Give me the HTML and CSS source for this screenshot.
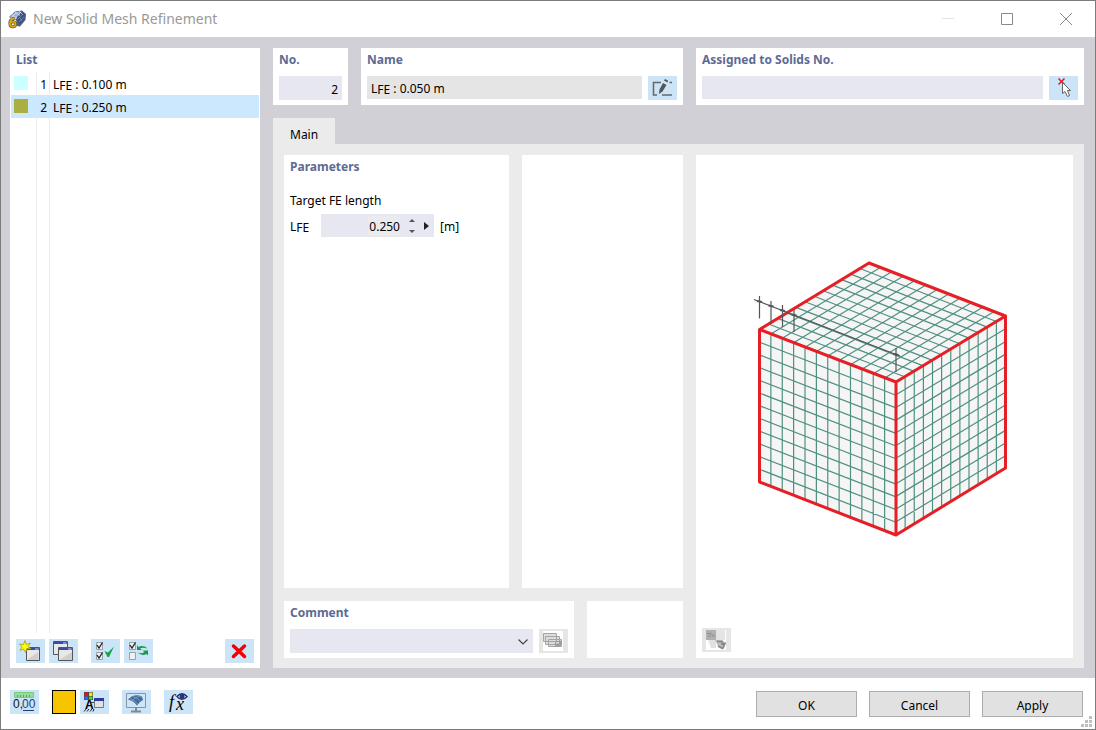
FILE: index.html
```html
<!DOCTYPE html>
<html lang="en">
<head>
<meta charset="utf-8">
<title>New Solid Mesh Refinement</title>
<link rel="stylesheet" href="styles.css">
</head>
<body>
<div class="window">
  <header class="titlebar">
    <svg class="app-icon" width="20" height="20" viewBox="0 0 20 20" aria-hidden="true">
      <path d="M2 8 8 2.500 15 1.500 19 5 18.500 11 13 17.500 10 17 9 11Z" fill="#4b6290"/>
      <path d="M3 7.500 8.500 3 14 2.500 10 7.500 8 11Z" fill="#9db4d8"/>
      <path d="M10 8 15 3 18 6 17 11 12.500 16Z" fill="#3d4f78"/>
      <path d="M5 5.500 10 9.500M8 3 13 6.500M12 2 16 6M4 9 9 4M8 10 14 3" stroke="#dce6f5" stroke-width=".7" fill="none"/>
      <path d="M11 10 16 5M12 13 17 8M13 9 15 12" stroke="#8297bf" stroke-width=".7"/>
      <path d="M7.500 9.500C4 9.500 3 12 3 14.500c0 4.500 5.500 4 5.500.5 0-2.800-4-3.300-5.500-.5" fill="none" stroke="#4d420f" stroke-width="3"/>
      <path d="M7.500 9.500C4 9.500 3 12 3 14.500c0 4.500 5.500 4 5.500.5 0-2.800-4-3.300-5.500-.5" fill="none" stroke="#e0a91c" stroke-width="1.800"/>
    </svg>
    <h1 class="title">New Solid Mesh Refinement</h1>
    <button class="win-button" aria-label="Minimize" disabled><svg width="12" height="12" viewBox="0 0 12 12"><path d="M0 5.500H12" stroke="#e3e3e3"/></svg></button>
    <button class="win-button" aria-label="Maximize"><svg width="12" height="12" viewBox="0 0 12 12"><path d="M.5.5H11.500V11.500H.5Z" fill="none" stroke="#8a8a8a"/></svg></button>
    <button class="win-button" aria-label="Close"><svg width="12" height="12" viewBox="0 0 12 12"><path d="M0 0 12 12M12 0 0 12" stroke="#8a8a8a"/></svg></button>
  </header>

  <main class="content">
    <section class="card list-card">
      <h2 class="heading">List</h2>
      <ul class="list" role="listbox" aria-label="List">
        <li class="row" role="option" aria-selected="false"><span class="swatch swatch-cyan"></span><span class="row-no">1</span><span>L<span class="low">FE</span> : 0.100 m</span></li>
        <li class="row selected" role="option" aria-selected="true"><span class="swatch swatch-olive"></span><span class="row-no">2</span><span>L<span class="low">FE</span> : 0.250 m</span></li>
      </ul>
      <div class="toolbar">
        <button class="tool" aria-label="New">
          <svg viewBox="0 0 29 24">
            <path d="M10.500 8.500H23.500V21.500H10.500Z" fill="#e8e8e8" stroke="#555"/><path d="M11 9H23V11H11Z" fill="#3b49a8"/><path d="M19 10H22.500" stroke="#c9d0ff"/><path d="M12 20 22.500 13V21H12Z" fill="#cfcfcf"/>
            <path d="M9 1.500 10.300 5.500 14.500 4 12 7.500 15 10 10.800 9.500 9.500 13.500 7.500 10 4 11.500 6 8 3.500 5 7.500 5.500Z" fill="#ff0" stroke="#a39a20" stroke-width=".8"/>
          </svg>
        </button>
        <button class="tool" aria-label="Copy">
          <svg viewBox="0 0 29 24">
            <path d="M4.500 2.500H18.500V15.500H4.500Z" fill="#e8e8e8" stroke="#555"/><path d="M5 3H18V5H5Z" fill="#3b49a8"/><path d="M14 4H17.500" stroke="#c9d0ff"/>
            <path d="M9.500 8.500H23.500V21.500H9.500Z" fill="#e8e8e8" stroke="#555"/><path d="M10 9H23V11H10Z" fill="#3b49a8"/><path d="M19 10H22.500" stroke="#c9d0ff"/><path d="M11 20.500 23 13V21H11Z" fill="#cfcfcf"/>
          </svg>
        </button>
        <button class="tool tool-spaced" aria-label="Check all">
          <svg viewBox="0 0 29 24">
            <path d="M5.500 3.500H11.500V10.500H5.500ZM5.500 13.500H11.500V20.500H5.500Z" fill="#eef0f2" stroke="#98a1aa"/><path d="M6 6 8 9 11.500 3.500M6 16 8 19 11.500 13.500" fill="none" stroke="#222" stroke-width="1.300"/>
            <path d="M13.500 12 17 13.500 23 7.500 18 18H16.500Z" fill="#14a34a"/>
          </svg>
        </button>
        <button class="tool" aria-label="Invert selection">
          <svg viewBox="0 0 29 24">
            <path d="M5.500 3.500H11.500V10.500H5.500ZM5.500 13.500H11.500V20.500H5.500Z" fill="#eef0f2" stroke="#98a1aa"/><path d="M6 6 8 9 11.500 3.500" fill="none" stroke="#222" stroke-width="1.300"/>
            <path d="M13 11V6L14.500 8Q19 5.500 23.500 9.500 18.500 8 16 9.500L18 11ZM24 11.500V16.500L22.500 15Q18 17.500 13.500 13.500 18.500 15 20.500 13L18.500 11.500Z" fill="#189a48"/>
          </svg>
        </button>
        <button class="tool tool-end" aria-label="Delete">
          <svg viewBox="0 0 29 24"><path d="M8.500 7 19.500 17.500M19.500 7 8.500 17.500" stroke="#f40000" stroke-width="3.500" stroke-linecap="round"/></svg>
        </button>
      </div>
    </section>

    <div class="details">
      <div class="top-row">
        <section class="card">
          <label class="heading" for="number">No.</label>
          <input class="field number-field" id="number" type="text" value="2">
        </section>
        <section class="card">
          <label class="heading" for="name">Name</label>
          <div class="field-row">
            <output class="field name-field" id="name">L<span class="low">FE</span> : 0.050 m</output>
            <button class="tool" aria-label="Edit name">
              <svg viewBox="0 0 29 24"><path d="M13 6.500H5.500V19H9M14 19H24M21.500 6.500H24" fill="none" stroke="#666" stroke-width="1.500"/><path d="M15 7 18.500 9 14.500 15.500 11 18 11.500 13.500ZM16 4.500 17 3 20 4.500 19.500 6.500Z" fill="#555"/></svg>
            </button>
          </div>
        </section>
        <section class="card">
          <label class="heading" for="solids">Assigned to Solids No.</label>
          <div class="field-row">
            <input class="field" id="solids" type="text">
            <button class="tool" aria-label="Select solids">
              <svg viewBox="0 0 29 24"><path d="M9.500 2.500 15.500 8.500M15.500 2.500 9.500 8.500" stroke="#e8141c" stroke-width="1.500"/><path d="M13.500 6.500V17.500L16 15.500 18.500 20.500 20.500 19.500 18.500 14.500H21.500Z" fill="#fff" stroke="#555" stroke-width=".9"/></svg>
            </button>
          </div>
        </section>
      </div>

      <div class="tabs" role="tablist"><button class="tab" role="tab" aria-selected="true">Main</button></div>
      <div class="pane" role="tabpanel">
        <div class="pane-left">
          <div class="pane-main">
            <section class="card parameters">
              <h2 class="heading">Parameters</h2>
              <p class="group-label">Target FE length</p>
              <div class="param-row">
                <label class="param-name" for="length">L<span class="low">FE</span></label>
                <div class="spinner">
                  <input class="spinner-input" id="length" type="text" value="0.250">
                  <div class="steps">
                    <button class="step" aria-label="Increase"><svg width="6" height="3" viewBox="0 0 6 3"><path d="M0 3 3 0 6 3Z" fill="#555"/></svg></button>
                    <button class="step" aria-label="Decrease"><svg width="6" height="3" viewBox="0 0 6 3"><path d="M0 0 3 3 6 0Z" fill="#555"/></svg></button>
                  </div>
                  <button class="step" aria-label="More"><svg width="5" height="8" viewBox="0 0 5 8"><path d="M0 0 5 4 0 8Z" fill="#222"/></svg></button>
                </div>
                <span class="unit">[m]</span>
              </div>
            </section>
            <section class="card"></section>
          </div>
          <div class="pane-foot">
            <section class="card">
              <label class="heading" for="comment">Comment</label>
              <div class="field-row">
                <div class="select-wrap">
                  <select class="field select" id="comment"><option></option></select>
                  <svg class="chevron" width="10" height="6" viewBox="0 0 10 6"><path d="M.5.5 5 5 9.500.5" fill="none" stroke="#444" stroke-width="1.200"/></svg>
                </div>
                <button class="tool tool-off" aria-label="Comment library" disabled>
                  <svg viewBox="0 0 29 24"><path d="M4 2H24V22H4Z" fill="#fff"/><path d="M4.500 4.500H17.500V12.500H4.500ZM6.500 7.500H20.500V15.500H6.500ZM9.500 10.500H22.500V17.500H9.500Z" fill="#dcdcdc" stroke="#a5a5a5"/><path d="M16.500 12.500H21.500V16.500H16.500ZM17.500 14 19 16 22 11.500" fill="none" stroke="#999"/></svg>
                </button>
              </div>
            </section>
            <section class="card"></section>
          </div>
        </div>
        <section class="card preview">
          <div class="stage">
            <svg class="cube" width="273" height="303" viewBox="748 240 273 303" role="img" aria-label="Solid with mesh">
              <defs>
                <path id="grid" vector-effect="non-scaling-stroke" d="M1 0V12M2 0V12M3 0V12M4 0V12M5 0V12M6 0V12M7 0V12M8 0V12M9 0V12M10 0V12M11 0V12M0 1H12M0 2H12M0 3H12M0 4H12M0 5H12M0 6H12M0 7H12M0 8H12M0 9H12M0 10H12M0 11H12"/>
              </defs>
              <path d="M760 330 869 263 1005 316V468L896 535 760 482Z" fill="#f5f5f5"/>
              <g fill="none" stroke="#4f9080" stroke-width="1.200">
                <use href="#grid" transform="matrix(11.375 4.417 0 12.708 759.500 329.500)"/>
                <use href="#grid" transform="matrix(11.375 4.417 9.125 -5.542 759.500 329.500)"/>
                <use href="#grid" transform="matrix(9.125 -5.500 0 12.708 896 382)"/>
              </g>
              <path d="M759.500 329.500 869 263 1005.500 316V468L896 535 759.500 482ZM759.500 329.500 896 382 1005.500 316M896 382V535" fill="none" stroke="#e61e25" stroke-width="3" stroke-linejoin="round"/>
              <path d="M754 299.500 900 356M759.500 296V318.500M771 301V324M782.500 305V327M794 310V332M896 348V372" fill="none" stroke="#555" stroke-width="1.200"/>
              <path d="M757 301 762 302M768.500 305.500 773.500 306.500M780 310 785 311M791.500 314.500 796.500 315.500M893.500 354 898.500 355" stroke="#555" stroke-width="2"/>
            </svg>
          </div>
          <button class="tool tool-off" aria-label="Picture" disabled>
            <svg viewBox="0 0 29 24"><path d="M4 2H24V22H4Z" fill="#fff"/><path d="M4 2H14V12H4Z" fill="#b0b0b0"/><path d="M14 2H23V12H14Z" fill="#e4e4e4"/><path d="M5 5.500H9L11 8H13M6 8H9" fill="none" stroke="#8c8c8c"/><path d="M6 12H14V20H9Z" fill="#e2e2e2"/><path d="M13 12H20L24 15 22 21 17 20Z" fill="#bcbcbc"/><path d="M15 13.500H20V16L23 15.500 20.500 20.500 16 18" fill="none" stroke="#888" stroke-width="1.500"/></svg>
          </button>
        </section>
      </div>
    </div>
  </main>

  <footer class="footer">
    <div class="footer-tools">
      <button class="tool" aria-label="Units and decimals">
        <svg viewBox="0 0 29 24"><path d="M4.500 2.500H23.500V7.500H4.500Z" fill="#96db98" stroke="#7cc982"/><path d="M7.500 5V7M10.500 5V7M13.500 5V7M16.500 5V7M19.500 5V7" stroke="#4fa65a"/><text x="3" y="18" class="icon-digits" fill="#111">0,</text><text x="12" y="18" class="icon-digits" fill="#213f7a">00</text><path d="M13 20.500H24" stroke="#213f7a"/></svg>
      </button>
      <button class="color-button" aria-label="Color"></button>
      <button class="tool tool-near" aria-label="Display properties">
        <svg viewBox="0 0 29 24"><path d="M4 2H13V10H4Z" fill="#444"/><path d="M4.500 2.500H8V6H4.500Z" fill="#e11"/><path d="M9 2.500H12.500V6H9Z" fill="#fd0"/><path d="M4.500 6.500H8V9.500H4.500Z" fill="#36f"/><path d="M9 6.500H12.500V9.500H9Z" fill="#4d2"/><text x="5" y="19" class="icon-letter">A</text><path d="M4 21.500 6 19M7 21.500 9 19M10 21.500 12 19M13 21.500 14 19" stroke="#222"/><path d="M14.500 8.500H23.500V17.500H14.500Z" fill="#e2e2e2" stroke="#777"/><path d="M14 8H24V11H14Z" fill="#2d399c"/><path d="M11 12.500H14" stroke="#444"/></svg>
      </button>
      <button class="tool tool-spaced" aria-label="View settings">
        <svg viewBox="0 0 29 24"><path d="M4.500 3.500H23.500V17.500H4.500Z" fill="#cfe4f5" stroke="#8795a3"/><path d="M14 18V21M9 21.500H19" stroke="#7e8994" stroke-width="2"/><path d="M6 9.500Q12 3 20 6.500L21 10Q18 11 15 15.500 12 11 6 9.500Z" fill="#426d9b"/><path d="M8 8.500Q13 11 16 14M11 6.500Q16 8 18.500 11.500M10 11Q15 5 20 7" fill="none" stroke="#8fb4d6" stroke-width=".6"/></svg>
      </button>
      <button class="tool tool-spaced" aria-label="Formula">
        <svg viewBox="0 0 29 24"><text x="5" y="18" class="icon-formula">f</text><text x="12" y="20" class="icon-formula">x</text><path d="M13 6.500Q18 1 23 6.500 18 12 13 6.500Z" fill="#fff" stroke="#232d61" stroke-width="1.400"/><circle cx="18" cy="6.500" r="2.500" fill="#26337c"/></svg>
      </button>
    </div>
    <div class="actions">
      <button class="action">OK</button>
      <button class="action">Cancel</button>
      <button class="action">Apply</button>
    </div>
    <svg class="grip" width="11" height="11" viewBox="0 0 11 11" aria-hidden="true"><path d="M0 8H3V11H0ZM4 8H7V11H4ZM8 8H11V11H8ZM4 4H7V7H4ZM8 4H11V7H8ZM8 0H11V3H8Z" fill="#bfbfbf"/></svg>
  </footer>
</div>
</body>
</html>
```

FILE: styles.css
```css
* { box-sizing: border-box; }
body {
  margin: 0;
  font: 12px/22px "Noto Sans", "Open Sans", sans-serif;
  color: #000;
}
button, input, select { font: inherit; color: inherit; }
button { padding: 0; border: 0; background: none; }
svg { display: block; }

.window {
  position: relative;
  display: flex;
  flex-direction: column;
  min-height: 100vh;
  border: 1px solid #7c7c7c;
  background: #fff;
}

.titlebar {
  display: flex;
  align-items: center;
  height: 36px;
  padding-left: 6px;
}
.app-icon { margin-right: 6px; }
.title {
  flex: 1;
  margin: 0;
  font-size: 14px;
  font-weight: 400;
  color: #999;
}
.win-button {
  display: grid;
  place-items: center;
  width: 59px;
  height: 34px;
}

.content {
  flex: 1;
  display: grid;
  grid-template-columns: 250px 1fr;
  gap: 13px;
  padding: 11px 11px 10px 9px;
  background: #d1d0d6;
}
.card {
  min-width: 0;
  padding: 0 6px 5px;
  background: #fff;
}
.heading {
  display: block;
  margin: 0;
  padding-top: 1px;
  font-size: 12px;
  font-weight: 700;
  line-height: 22px;
  color: #5c6b94;
}
.low {
  position: relative;
  top: 1px;
}

.list-card { display: flex; flex-direction: column; }
.list {
  flex: 1;
  margin: 1px -5px 6px;
  padding: 0;
  list-style: none;
  background:
    linear-gradient(#ebebeb, #ebebeb) 25px 0 / 1px 100% no-repeat,
    linear-gradient(#ebebeb, #ebebeb) 38px 0 / 1px 100% no-repeat;
}
.row {
  display: flex;
  align-items: center;
  height: 23px;
  padding: 2px 3px 0;
}
.selected { background: #cce8ff; }
.swatch { width: 14px; height: 14px; margin-bottom: 4px; }
.swatch-cyan { background: #ccffff; }
.swatch-olive { background: #abae41; }
.row-no { width: 19px; margin-right: 6px; text-align: right; }

.toolbar { display: flex; gap: 4px; }
.tool {
  flex: none;
  width: 29px;
  height: 24px;
  background: #cce4f7;
}
.tool-off { background: #e6e6e6; }
.tool-spaced { margin-left: 9px; }
.tool-end { margin-left: auto; }

.details { display: flex; flex-direction: column; min-width: 0; }
.top-row {
  display: grid;
  grid-template-columns: 75px 322fr 388fr;
  gap: 13px;
}
.top-row .heading, .pane-foot .heading { margin-bottom: 5px; }
.field {
  display: block;
  width: 100%;
  min-width: 0;
  height: 23px;
  padding: 0 4px;
  border: 0;
  border-radius: 0;
  background: #e7e7f1;
}
.number-field { height: 24px; padding-top: 2px; text-align: right; }
.name-field { background: #e5e5e5; line-height: 25px; }
.field-row { display: flex; gap: 6px; }

.tabs { display: flex; margin-top: 13px; }
.tab {
  height: 26px;
  padding: 6px 17px 0;
  background: #ebebeb;
}
.pane {
  flex: 1;
  display: grid;
  grid-template-columns: 399fr 377fr;
  gap: 13px;
  padding: 11px 11px 10px;
  background: #ebebeb;
}
.pane-left { display: flex; flex-direction: column; gap: 13px; min-width: 0; }
.pane-main {
  flex: 1;
  display: grid;
  grid-template-columns: 225fr 161fr;
  gap: 13px;
}
.pane-foot {
  display: grid;
  grid-template-columns: 290fr 96fr;
  gap: 13px;
}

.group-label { margin: 12px 0 2px; }
.param-row { display: flex; gap: 6px; height: 23px; line-height: 23px; }
.param-name, .unit { padding-top: 1px; }
.param-name { width: 25px; }
.spinner {
  display: flex;
  align-items: center;
  justify-content: flex-end;
  gap: 9px;
  width: 113px;
  height: 23px;
  padding-right: 5px;
  background: #e7e7f1;
}
.spinner-input {
  width: 32px;
  height: 19px;
  padding: 1px 0 0;
  border: 0;
  background: #ebebee;
  text-align: right;
}
.steps { display: grid; gap: 8px; }

.select-wrap { position: relative; flex: 1; min-width: 0; }
.select { height: 24px; appearance: none; }
.chevron {
  position: absolute;
  top: 10px;
  right: 5px;
  pointer-events: none;
}

.preview {
  display: flex;
  flex-direction: column;
  padding: 0 0 6px;
}
.preview .tool { margin-left: 6px; }
.stage { flex: 1; display: grid; place-items: center; }
.cube { max-width: 100%; }

.footer {
  display: flex;
  justify-content: space-between;
  align-items: flex-start;
  padding: 12px 12px 12px 9px;
}
.footer-tools { display: flex; gap: 4px; }
.color-button {
  width: 24px;
  height: 24px;
  margin-left: 9px;
  border: 1px solid #000;
  background: #f6c400;
}
.actions { display: flex; gap: 12px; padding-top: 1px; }
.action {
  width: 101px;
  height: 26px;
  padding-top: 3px;
  border: 1px solid #adadad;
  background: #e1e1e1;
}
.grip { position: absolute; right: 3px; bottom: 2px; }

.icon-digits { font: 12px "Liberation Sans", sans-serif; }
.icon-letter { font: 700 12px "Liberation Sans", sans-serif; }
.icon-formula { font: italic 18px "Liberation Serif", serif; }
```
